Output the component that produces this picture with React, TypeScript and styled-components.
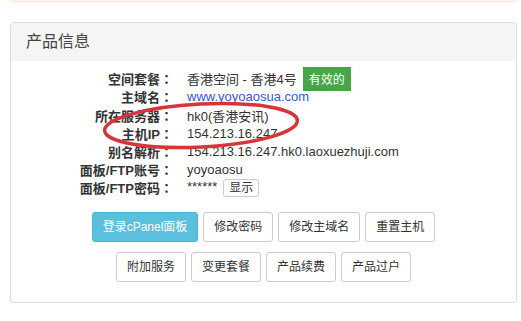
import React from 'react';
import styled, { createGlobalStyle } from 'styled-components';

const GlobalStyle = createGlobalStyle`
  body {
    margin: 0;
    background: #fff;
    color: #333;
    font-family: "Liberation Sans", Arial, "Noto Sans CJK SC", sans-serif;
    font-size: 13px;
  }
`;

const Page = styled.div`
  padding: 0 4px 0 10px;
`;

const AlertEdge = styled.div`
  height: 2px;
  box-sizing: border-box;
  background: #fcf8e3;
  border: 1px solid #faebcc;
  border-top: none;
  border-radius: 0 0 4px 4px;
  margin-bottom: 20px;
`;

const Panel = styled.div`
  position: relative;
  border: 1px solid #ddd;
  border-radius: 4px;
  background: #fff;
  box-shadow: 0 1px 1px rgba(0, 0, 0, 0.05);
`;

const PanelHeading = styled.div`
  background: #f5f5f5;
  padding: 10px 15px;
  font-size: 16px;
  line-height: 1.1;
  color: #444;
  border-radius: 3px 3px 0 0;
`;

const PanelBody = styled.div`
  padding: 9px 15px 20px;
`;

const InfoGrid = styled.div`
  display: grid;
  grid-template-columns: 147px 1fr;
  column-gap: 14px;
  grid-auto-rows: 18.2px;
  align-items: center;
`;

const Label = styled.div`
  text-align: right;
  font-weight: bold;
  white-space: nowrap;
`;

// full-width colon centred in its em box, as in the screenshot
const Colon = styled.span`
  font-family: "Noto Sans CJK TC", sans-serif;
`;

const Value = styled.div`
  display: flex;
  align-items: center;
  white-space: nowrap;
  height: 100%;
`;

const Link = styled.a`
  color: #3558d6;
  text-decoration: none;
`;

const Badge = styled.span`
  display: inline-flex;
  align-items: center;
  height: 24px;
  box-sizing: border-box;
  padding: 0 6px;
  margin-left: 6px;
  background: #47a548;
  color: #fff;
  font-size: 12px;
`;

const Stars = styled.span`
  align-self: flex-start;
  line-height: 16px;
`;

const TinyButton = styled.button`
  height: 18px;
  box-sizing: border-box;
  margin-left: 6px;
  padding: 0 5px;
  border: 1px solid #ccc;
  border-radius: 3px;
  background: #fff;
  color: #333;
  font-family: inherit;
  font-size: 12px;
  line-height: 16px;
`;

const Actions = styled.div`
  margin-top: 15px;
  display: flex;
  flex-direction: column;
  gap: 10px;
`;

const ButtonRow = styled.div`
  display: flex;
  justify-content: center;
  gap: 5px;
`;

const Button = styled.button<{ $primary?: boolean }>`
  height: 30px;
  box-sizing: border-box;
  padding: 0 10px;
  border: 1px solid ${(p) => (p.$primary ? '#46b8da' : '#ccc')};
  border-radius: 3px;
  background: ${(p) => (p.$primary ? '#5bc0de' : '#fff')};
  color: ${(p) => (p.$primary ? '#fff' : '#333')};
  font-family: inherit;
  font-size: 12px;
  line-height: 28px;
  white-space: nowrap;
`;

const Annotation = styled.svg`
  position: absolute;
  left: 0;
  top: 0;
  width: 100%;
  height: 100%;
  pointer-events: none;
  overflow: visible;
`;

const rows: [string, React.ReactNode][] = [
  [
    '空间套餐',
    <>
      香港空间 - 香港4号<Badge>有效的</Badge>
    </>,
  ],
  ['主域名', <Link href="#">www.yoyoaosua.com</Link>],
  ['所在服务器', 'hk0(香港安讯)'],
  ['主机IP', '154.213.16.247'],
  ['别名解析', '154.213.16.247.hk0.laoxuezhuji.com'],
  ['面板/FTP账号', 'yoyoaosu'],
  [
    '面板/FTP密码',
    <>
      <Stars>******</Stars>
      <TinyButton>显示</TinyButton>
    </>,
  ],
];

export default function App() {
  return (
    <Page>
      <GlobalStyle />
      <AlertEdge />
      <Panel>
        <PanelHeading>产品信息</PanelHeading>
        <PanelBody>
          <InfoGrid>
            {rows.map(([label, value]) => (
              <React.Fragment key={label}>
                <Label>
                  {label}
                  <Colon>：</Colon>
                </Label>
                <Value>{value}</Value>
              </React.Fragment>
            ))}
          </InfoGrid>
          <Actions>
            <ButtonRow>
              <Button $primary>登录cPanel面板</Button>
              <Button>修改密码</Button>
              <Button>修改主域名</Button>
              <Button>重置主机</Button>
            </ButtonRow>
            <ButtonRow>
              <Button>附加服务</Button>
              <Button>变更套餐</Button>
              <Button>产品续费</Button>
              <Button>产品过户</Button>
            </ButtonRow>
          </Actions>
        </PanelBody>
        <Annotation>
          <ellipse
            cx="190"
            cy="102.5"
            rx="96.5"
            ry="21.5"
            transform="rotate(-3 190 102.5)"
            fill="none"
            stroke="#d8353b"
            strokeWidth="3.5"
          />
        </Annotation>
      </Panel>
    </Page>
  );
}
